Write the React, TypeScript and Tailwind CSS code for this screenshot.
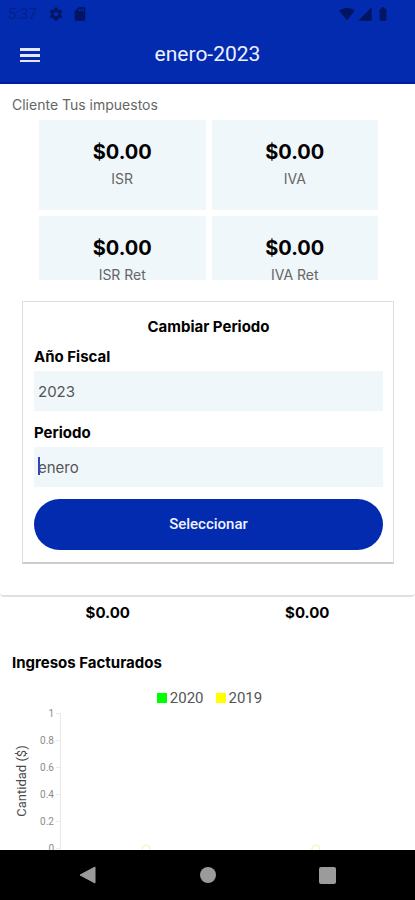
import React from "react";
import {
  MdBatteryFull,
  MdSdCard,
  MdSettings,
  MdSignalCellular4Bar,
  MdSignalWifi4Bar,
} from "react-icons/md";

const summary = [
  { label: "ISR", value: "$0.00" },
  { label: "IVA", value: "$0.00" },
  { label: "ISR Ret", value: "$0.00" },
  { label: "IVA Ret", value: "$0.00" },
];

const ticks = ["1", "0.8", "0.6", "0.4", "0.2", "0"];

function StatusBar() {
  return (
    <div className="flex h-7 items-center justify-between pl-2 pr-6 text-[#021560]">
      <div className="flex items-center">
        <span className="w-10 text-[15px] text-[#02208a]">5:37</span>
        <MdSettings className="size-4" />
        <MdSdCard className="ml-2 size-4" />
      </div>
      <div className="flex items-center gap-0.5">
        <MdSignalWifi4Bar className="size-4" />
        <MdSignalCellular4Bar className="size-4" />
        <MdBatteryFull className="size-4" />
      </div>
    </div>
  );
}

function Header() {
  return (
    <header className="shrink-0 border-b-2 border-[#001a9c] bg-[#022bb0]">
      <StatusBar />
      <div className="grid h-[54px] grid-cols-[40px_1fr_40px] items-center px-2.5">
        <button type="button" aria-label="Menú" className="flex h-10 items-center justify-center text-[#e6e8fa]">
          <svg width="20" height="14" viewBox="0 0 20 14" fill="currentColor">
            <rect width="20" height="3" />
            <rect y="6" width="20" height="3" />
            <rect y="12" width="20" height="2" />
          </svg>
        </button>
        <h1 className="text-center text-[21px] text-[#eef0ff]">enero-2023</h1>
      </div>
    </header>
  );
}

function Chart() {
  return (
    <svg className="block h-[170px] w-full" role="img" aria-label="Ingresos Facturados">
      <g stroke="#e9e9e9">
        <line x1="60.5" y1="5" x2="60.5" y2="170" />
        {ticks.map((t, i) => (
          <line key={t} x1="56" x2="60" y1={5.5 + i * 27} y2={5.5 + i * 27} />
        ))}
      </g>
      <g fill="#8c8c8c" fontSize="10" textAnchor="end">
        {ticks.map((t, i) => (
          <text key={t} x="54" y={9 + i * 27}>
            {t}
          </text>
        ))}
      </g>
      <text transform="translate(26 73) rotate(-90)" textAnchor="middle" fontSize="13" fill="#4a4a4a">
        Cantidad ($)
      </text>
      <g fill="none" stroke="#f4f4a8">
        <circle cx="35.2%" cy="141" r="4" />
        <circle cx="76.1%" cy="141" r="4" />
      </g>
    </svg>
  );
}

function PeriodDialog() {
  return (
    <div
      role="dialog"
      aria-labelledby="dialog-title"
      className="absolute inset-x-0 top-[280px] rounded-b-sm border-b-2 border-[#e0e0e0] bg-white pb-[31px] pl-[22px] pr-[21px] pt-[21px]"
    >
      <form className="border border-b-2 border-[#dedede] border-b-[#cccccc] pb-3 pl-[11px] pr-2.5 pt-[15px] font-['Inter',sans-serif]">
        <h2 id="dialog-title" className="text-center text-[15px] font-bold leading-5">
          Cambiar Periodo
        </h2>
        <label htmlFor="year" className="mt-2.5 block text-[15px] font-bold leading-5">
          Año Fiscal
        </label>
        <input
          id="year"
          defaultValue="2023"
          className="mt-1 block h-10 w-full bg-[#f0f7fa] px-1 text-[15px] text-[#555555] outline-none"
        />
        <label htmlFor="period" className="mt-3 block text-[15px] font-bold leading-5">
          Periodo
        </label>
        <div className="relative mt-1">
          <input
            id="period"
            defaultValue="enero"
            className="block h-10 w-full bg-[#f0f7fa] px-1 text-[15px] text-[#555555] outline-none"
          />
          <span className="absolute left-1 top-2.5 h-[18px] w-0.5 bg-[#3346b4]" />
        </div>
        <button
          type="button"
          className="mt-3 h-[51px] w-full rounded-full bg-[#022bb0] font-['Roboto',sans-serif] text-[15px] font-medium text-[#f0f2ff]"
        >
          Seleccionar
        </button>
      </form>
    </div>
  );
}

function NavigationBar() {
  return (
    <nav className="flex h-[50px] shrink-0 items-center justify-around bg-black px-7 text-[#9b9b9b]">
      <button type="button" aria-label="Atrás">
        <svg width="18" height="18" viewBox="0 0 18 18" fill="currentColor">
          <path d="M16 1v16L1 9z" stroke="currentColor" strokeLinejoin="round" />
        </svg>
      </button>
      <button type="button" aria-label="Inicio" className="size-4 rounded-full bg-current" />
      <button type="button" aria-label="Recientes" className="size-[17px] rounded-xs bg-current" />
    </nav>
  );
}

export default function App() {
  return (
    <div className="relative flex h-screen flex-col overflow-hidden bg-white font-['Roboto',sans-serif] text-black">
      <Header />
      <main className="min-h-0 flex-1 overflow-hidden">
        <p className="px-3 pt-[11px] font-['Inter',sans-serif] text-sm leading-5 text-[#666666]">Cliente Tus impuestos</p>
        <section className="ml-[39px] mr-[37px] mt-[5px] grid grid-cols-2 gap-1.5 font-['Inter',sans-serif]">
          {summary.map((item) => (
            <div key={item.label} className="h-[90px] bg-[#f0f7fa] pt-[18px] text-center">
              <div className="text-xl font-bold leading-7">{item.value}</div>
              <div className="text-sm leading-[26px] text-[#666666]">{item.label}</div>
            </div>
          ))}
        </section>
        <section className="mx-2 mt-[288px] grid grid-cols-2 text-center font-['Inter',sans-serif] text-[15px] font-bold leading-5">
          <div>
            <div className="h-[9px]" />
            $0.00
          </div>
          <div>
            <div className="mx-auto h-[9px] w-2.5">
              <div className="size-[3px] bg-[#444444]" />
            </div>
            $0.00
          </div>
        </section>
        <h2 className="mt-[30px] px-3 font-['Inter',sans-serif] text-[15px] font-bold leading-5">Ingresos Facturados</h2>
        <div className="mt-[15px] flex items-center justify-center gap-3 pl-1 text-[15px] leading-5 text-[#555555]">
          <span className="flex items-center gap-[3px]">
            <i className="size-2.5 bg-[#00ff00]" />
            2020
          </span>
          <span className="flex items-center gap-[3px]">
            <i className="size-2.5 bg-[#ffff00]" />
            2019
          </span>
        </div>
        <Chart />
      </main>
      <NavigationBar />
      <PeriodDialog />
    </div>
  );
}
